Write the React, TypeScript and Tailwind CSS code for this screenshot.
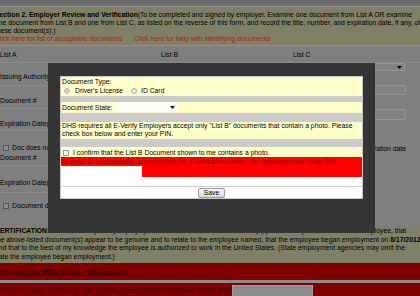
const Check = () => (
  <span className="inline-block h-[6px] w-[6px] shrink-0 border border-[#555] bg-[#8d8d8d]" />
);

const Radio = ({ on = false }: { on?: boolean }) => (
  <span className="flex h-[6px] w-[6px] shrink-0 items-center justify-center rounded-full border border-[#a8a8a8] bg-[#ececec]">
    {on && <span className="h-[2px] w-[2px] rounded-full bg-[#b0b0b0]" />}
  </span>
);

function Modal() {
  return (
    <div className="absolute left-[48px] top-[63px] h-[170px] w-[327px] bg-[#353535] px-[12px] pt-[13px]">
      <div className="border border-[#c8c8c8] bg-white">
        <div className="h-[19px] bg-[#ffffcc] pl-[1px] pt-[1px]">
          <div>Document Type:</div>
          <div className="flex h-[9px] items-center pl-[2px]">
            <Radio on />
            <span className="ml-[5px] w-[56px]">Driver's License</span>
            <Radio />
            <span className="ml-[4px]">ID Card</span>
          </div>
        </div>
        <div className="h-[6px] bg-[#cccccc]" />
        <div className="flex h-[11px] items-center bg-[#ffffcc] pl-[1px]">
          <span className="w-[55px]">Document State:</span>
          <div className="flex h-[9px] w-[60px] items-center justify-end bg-white pr-[2px]">
            <svg width="5" height="3" viewBox="0 0 5 3">
              <polygon points="0,0 5,0 2.5,3" fill="#000" />
            </svg>
          </div>
        </div>
        <div className="h-[9px] bg-[#cccccc]" />
        <div className="h-[17px] bg-[#ffffcc] pl-[1px]">
          DHS requires all E-Verify Employers accept only "List B" documents that contain a photo. Please
          <br />
          check box below and enter your PIN.
        </div>
        <div className="h-[8px] bg-[#cccccc]" />
        <div className="flex h-[10px] items-center bg-[#ffffcc] pl-[2px] pt-[1px]">
          <span className="inline-block h-[6px] w-[6px] border border-[#9a9a9a] bg-[#f2f2f2]" />
          <span className="ml-[4px]">I confirm that the List B Document shown to me contains a photo.</span>
        </div>
        <div className="h-[20px] bg-[#ff0000] pt-[1px]">
          <div className="pl-[1px] text-[#990000]">
            In order to electronically acknowledge the confirmation above, the employer must enter PIN
          </div>
          <div className="h-[11px] w-[81px] bg-white" />
        </div>
        <div className="h-[10px] border-b border-[#d0d0d0] bg-white" />
        <div className="flex h-[11px] items-center justify-center bg-white">
          <button className="flex h-[10px] w-[27px] items-center justify-center rounded-[2px] border border-[#9a9a9a] bg-gradient-to-b from-[#f6f6f6] to-[#dadada] text-[6.8px] leading-[8px] text-black">
            Save
          </button>
        </div>
      </div>
    </div>
  );
}

export default function App() {
  return (
    <div className="relative h-[296px] w-[420px] overflow-hidden bg-[#7f7f7f] font-['Liberation_Sans',Arial,sans-serif] text-[6.8px] leading-[8px] text-black">
      <div className="ml-[-5px] w-[440px] whitespace-nowrap">
        <div className="h-[6px] bg-[#6e6e6e]" />

        <section className="h-[40px] border-y border-[#939393] bg-[#808066] pt-[4px]">
          <div>
            <b>Section 2. Employer Review and Verification</b>(To be completed and signed by employer. Examine one document
            from List A OR examine
          </div>
          <div>
            one document from List B and one from List C, as listed on the reverse of this form, and record the title,
            number, and expiration date, if any, of
          </div>
          <div>these document(s).)</div>
          <div className="text-[#a3261a]">
            <span className="inline-block w-[139px]">Click here for list of acceptable documents</span>
            <span>Click here for help with identifying documents</span>
          </div>
        </section>

        <div className="h-[17px] border-b border-[#8a8a8a] pl-[5px] pt-[5px]">
          <span className="inline-block w-[161px]">List A</span>
          <span className="inline-block w-[132px]">List B</span>
          <span>List C</span>
        </div>

        <div className="flex h-[164px]">
          <div className="w-[53px] shrink-0 overflow-hidden pl-[5px]">
            <div className="h-[23px] border-b border-[#8a8a8a] pt-[10px]">Issuing Authority</div>
            <div className="h-[23px] border-b border-[#8a8a8a] pt-[11px]">Document #</div>
            <div className="h-[22px] border-b border-[#8a8a8a] pt-[11px]">Expiration Date(mm/dd/yyyy)</div>
            <div className="h-[35px] border-b border-[#8a8a8a] pt-[13px]">
              <div className="flex items-center">
                <span className="ml-[3px] mr-[3px] flex">
                  <Check />
                </span>
                Doc does not have expiration date
              </div>
              <div className="mt-[2px]">Document #</div>
            </div>
            <div className="h-[27px] border-b border-[#8a8a8a] pt-[13px]">Expiration Date(mm/dd/yyyy)</div>
            <div className="pt-[9px]">
              <div className="flex items-center">
                <span className="ml-[3px] mr-[3px] flex">
                  <Check />
                </span>
                Document does not have expiration date
              </div>
            </div>
          </div>

          <div className="ml-[217px] flex w-[155px] flex-col">
            <div className="flex h-[8px] w-[140px] items-center justify-end rounded-[1px] border border-[#969696] bg-[#828282] pr-[2px]">
              <svg width="5" height="3" viewBox="0 0 5 3">
                <polygon points="0,0 5,0 2.5,3" fill="#000" />
              </svg>
            </div>
            <div className="mt-[14px] h-[10px] w-[141px] rounded-[2px] border border-[#969696] bg-[#828282]" />
            <div className="mt-[14px] h-[11px] w-[141px] rounded-[2px] border border-[#969696] bg-[#828282]" />
            <div className="mt-[25px] flex w-[141px] items-center justify-end gap-[3px]">
              <Check />
              <span>Document does not have expiration date</span>
            </div>
          </div>
        </div>

        <section className="h-[36px] bg-[#808066] leading-[8.5px]">
          <div>
            <b>CERTIFICATION</b>: I attest, under penalty of perjury, that I have examined the document(s) presented by
            the above-named employee, that
          </div>
          <div>
            the above-listed document(s) appear to be genuine and to relate to the employee named, that the employee
            began employment on <b>8/17/2012</b>
          </div>
          <div>
            and that to the best of my knowledge the employee is authorized to work in the United States. (State
            employment agencies may omit the
          </div>
          <div>date the employee began employment.)</div>
        </section>

        <div className="h-[17px] bg-[#800000] pl-[5px] pt-[2px] text-[9.5px] leading-[15px] text-[#1a0000]">
          Employer Electronic Signature
        </div>
        <div className="h-[3px] bg-[#8c8c8c]" />
        <div className="flex h-[20px] items-start bg-[#800000] text-[#3a0000]">
          <span className="pt-[4px]">
            In order to electronically sign this section, the employer must enter his/her PIN
          </span>
          <div className="ml-[2px] mt-[2px] h-[14px] w-[81px] border border-[#a0a0a0] bg-[#8b8b8b]" />
        </div>
      </div>

      <Modal />
    </div>
  );
}
